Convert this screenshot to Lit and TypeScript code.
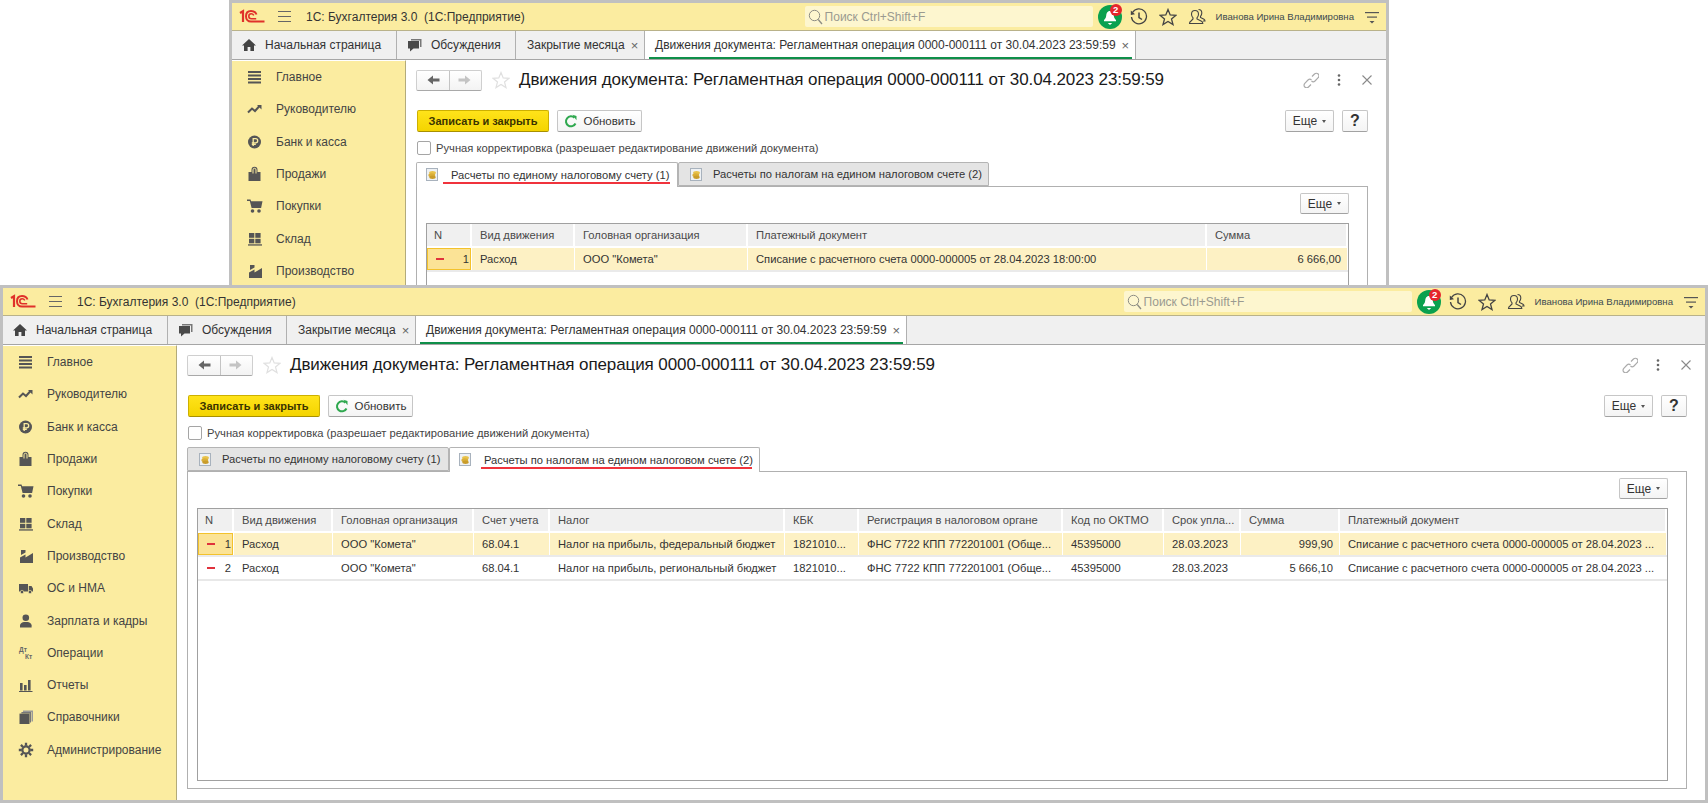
import { LitElement, html, css, svg } from "lit";
import { customElement, property } from "lit/decorators.js";

const ic = (body: unknown, size = 16, vb = 16) =>
  html`<svg width=${size} height=${size} viewBox="0 0 ${vb} ${vb}" aria-hidden="true">${body}</svg>`;

const ICONS: Record<string, unknown> = {
  main: svg`<g fill="#555"><rect x="1" y="2" width="13" height="2"/><rect x="1" y="5.5" width="13" height="2"/><rect x="1" y="9" width="13" height="2"/><rect x="1" y="12.5" width="13" height="2"/></g>`,
  trend: svg`<path d="M1 11.5 L5 7.5 L8 10 L12.5 5" fill="none" stroke="#555" stroke-width="2"/><path d="M10 4h4.5v4.5z" fill="#555"/>`,
  bank: svg`<circle cx="7.5" cy="8" r="6.5" fill="#555"/><path d="M6.2 12V4.6h2.4a2 2 0 0 1 0 4.2H4.8M4.8 10.4h4" fill="none" stroke="#fbeca0" stroke-width="1.3"/>`,
  bag: svg`<path d="M1.5 6h3V3.8a3 3 0 0 1 6 0V6h3v9h-12z" fill="#555"/><path d="M6 7.5V3.8a1.5 1.5 0 0 1 3 0V7.5" fill="none" stroke="#fbeca0" stroke-width="1"/>`,
  cart: svg`<path d="M0 1.5h3.5l.6 1.8H15.500l-1.400 6.700H4.600L2.800 3H0z" fill="#555"/><circle cx="5.5" cy="13" r="1.8" fill="#555"/><circle cx="12" cy="13" r="1.8" fill="#555"/>`,
  store: svg`<g fill="#555"><rect x="2" y="2" width="5.3" height="4.8"/><rect x="8.3" y="2" width="5.3" height="4.8"/><rect x="2" y="7.8" width="5.3" height="4.5"/><rect x="8.3" y="7.8" width="5.3" height="4.5"/><rect x="1" y="13.3" width="14" height="1.3"/></g>`,
  factory: svg`<path d="M2 15V9.5L7.5 6.5v3L15 5v10z" fill="#555"/><path d="M3 2h4.5v2.5L3 7z" fill="#555"/>`,
  truck: svg`<path d="M1 4h9v7.5H1zM10.8 6h2.7l1.5 2.4v3.1h-4.2z" fill="#555"/><circle cx="4" cy="12" r="1.7" fill="#555" stroke="#fbeca0" stroke-width=".6"/><circle cx="12" cy="12" r="1.7" fill="#555" stroke="#fbeca0" stroke-width=".6"/>`,
  person: svg`<circle cx="7.8" cy="4.8" r="3.3" fill="#555"/><path d="M2 14.5v-2.3c0-2 2.5-3 4-3.200h3.600c1.500.2 4 1.200 4 3.200v2.300z" fill="#555"/>`,
  dtkt: svg`<text x="1" y="7" font-size="6.5" font-weight="700" fill="#666" font-family="Liberation Sans, sans-serif">Дт</text><text x="7" y="14" font-size="6.5" font-weight="700" fill="#666" font-family="Liberation Sans, sans-serif">Кт</text>`,
  chart: svg`<g fill="#555"><rect x="2" y="6" width="2.6" height="7.5"/><rect x="6" y="8" width="2.6" height="5.5"/><rect x="10" y="3" width="2.6" height="10.5"/><rect x="1" y="14" width="13.5" height="1"/></g>`,
  books: svg`<path d="M5 1.5h10v11h-1.5V3H5z" fill="#999"/><path d="M3.4 3H13v10.5h-1.3V4.4H3.4z" fill="#777"/><rect x="1.5" y="4.6" width="10" height="10.4" fill="#555"/>`,
  gear: svg`<circle cx="8" cy="8" r="3.6" fill="none" stroke="#555" stroke-width="2.2"/><g stroke="#555" stroke-width="2.3"><path d="M8 .8v3M8 12.2v3M.8 8h3M12.2 8h3M2.9 2.9l2.1 2.1M11 11l2.1 2.1M2.9 13.1 5 11M11 5l2.1-2.1"/></g>`,
};

const NAV: [string, string][] = [
  ["main", "Главное"], ["trend", "Руководителю"], ["bank", "Банк и касса"], ["bag", "Продажи"],
  ["cart", "Покупки"], ["store", "Склад"], ["factory", "Производство"], ["truck", "ОС и НМА"],
  ["person", "Зарплата и кадры"], ["dtkt", "Операции"], ["chart", "Отчеты"], ["books", "Справочники"],
  ["gear", "Администрирование"],
];

const TITLE = "Движения документа: Регламентная операция 0000-000111 от 30.04.2023 23:59:59";
const SUB_TABS = ["Расчеты по единому налоговому счету (1)", "Расчеты по налогам на едином налоговом счете (2)"];

interface Column { title: string; width: number; right?: boolean }
interface TableData { columns: Column[]; rows: string[][] }

const logo = html`<svg class="logo" width="26" height="16" viewBox="0 0 26 16" aria-hidden="true">
  <path d="M1 4 4 2.2V13" fill="none" stroke="#e0312a" stroke-width="2.2"/>
  <path d="M17.5 5.5C16.5 3 14.5 2 12 2 8.8 2 7 4.3 7 7.3s1.9 5.3 5 5.3H25.5" fill="none" stroke="#e0312a" stroke-width="2"/>
  <path d="M14.8 6.3C14 5 13 4.8 12.2 4.8 10.6 4.8 9.8 6 9.8 7.3s.9 2.5 2.6 2.5h4.8" fill="none" stroke="#e0312a" stroke-width="1.6"/>
</svg>`;

const coin = html`<svg class="coin" width="12" height="13" viewBox="0 0 12 13" aria-hidden="true">
  <rect x=".5" y=".5" width="11" height="12" fill="#eef1f4" stroke="#a8b2bd"/>
  <ellipse cx="6.5" cy="4.8" rx="3.4" ry="1.9" fill="#e8c24a"/>
  <ellipse cx="5.8" cy="7.2" rx="3.4" ry="1.9" fill="#d9ae38"/>
  <ellipse cx="6.5" cy="9.2" rx="3.2" ry="1.7" fill="#c99c2a"/>
</svg>`;

@customElement("doc-window")
class DocWindow extends LitElement {
  @property({ type: Number }) activeTab = 0;
  @property({ type: Boolean, reflect: true }) clipped = false;
  @property({ type: Number }) navCount = 13;
  @property({ attribute: false }) table: TableData = { columns: [], rows: [] };

  static styles = css`
    :host { display: flex; flex-direction: column; box-sizing: border-box; border: 3px solid #c0c0c0; background: #fff; overflow: hidden; font: 12px "Liberation Sans", Arial, sans-serif; color: #333; }
    :host([clipped]) { border-bottom: 0; }
    svg { display: block; flex: none; }
    .hdr { flex: none; height: 27px; display: flex; align-items: center; background: #fbeca0; border-bottom: 1px solid #b9b28a; }
    .logo { margin-left: 7px; }
    .burger { margin-left: 13px; width: 13px; height: 11px; border-top: 1px solid #666; border-bottom: 1px solid #666; position: relative; box-sizing: border-box; }
    .burger::after { content: ""; position: absolute; left: 0; right: 0; top: 4px; height: 1px; background: #666; }
    .app { margin-left: 15px; white-space: pre; }
    .search { margin-left: auto; width: 288px; height: 21px; box-sizing: border-box; background: #fdf6cf; border-radius: 2px; display: flex; align-items: center; padding-left: 3px; gap: 1px; color: #9a9a90; font-size: 12px; }
    .bell { position: relative; margin-left: 5px; width: 24px; height: 24px; flex: none; }
    .badge { position: absolute; left: 12px; top: -1px; width: 12px; height: 12px; border-radius: 50%; background: #e5262c; color: #fff; font-size: 9.5px; font-weight: 700; line-height: 12px; text-align: center; }
    .hic { margin-left: 8px; }
    .hic.s1 { margin-left: 11px; }
    .user { margin-left: 10px; font-size: 9.6px; white-space: nowrap; color: #3c4a50; }
    .menu { margin: 0 7px 0 11px; }

    .tabs { flex: none; height: 29px; box-sizing: border-box; display: flex; background: #f0f0f0; border-bottom: 1px solid #a6a6a6; }
    .tab { box-sizing: border-box; flex: none; height: 28px; display: flex; align-items: center; border-right: 1px solid #b0b0b0; position: relative; white-space: nowrap; }
    .t1 { width: 165px; padding-left: 9px; }
    .t1 span { margin-left: 8px; }
    .t2 { width: 119px; padding-left: 10px; }
    .t2 span { margin-left: 8px; }
    .t3 { width: 129px; padding-left: 11px; }
    .t4 { width: 491px; padding-left: 10px; background: #fff; }
    .t4::after { content: ""; position: absolute; left: 4px; right: 3px; bottom: 0; height: 2px; background: #0f8f4a; }
    .x { margin-left: 6px; color: #666; font-size: 13px; }

    .body { flex: 1; min-height: 0; display: flex; }
    .side { flex: none; width: 174px; box-sizing: border-box; background: #fbeca0; border-top: 1px solid #fff; border-right: 1px solid #b3ab7a; }
    .nav { height: 32.3px; display: flex; align-items: center; padding-left: 15px; color: #444; }
    .nav span { margin-left: 13px; }
    .main { flex: 1; min-width: 0; display: flex; flex-direction: column; padding: 9px 18px 11px 10px; font-size: 11.2px; }
    .tr { flex: none; height: 22px; display: flex; align-items: center; }
    .back-fwd { display: flex; width: 66px; height: 21px; box-sizing: border-box; border: 1px solid #cfcfcf; border-bottom-color: #a9a9a9; border-radius: 2px; background: linear-gradient(#fff, #f3f3f3); }
    .back-fwd div { flex: 1; display: flex; align-items: center; justify-content: center; }
    .back-fwd div + div { border-left: 1px solid #c4c4c4; }
    .star { margin-left: 10px; }
    .title { margin-left: 9px; font-size: 17px; letter-spacing: -0.1px; color: #1a1a1a; white-space: nowrap; }
    .tools { margin-left: auto; margin-right: -7px; display: flex; align-items: center; gap: 12px; }
    .cmd { flex: none; margin-top: 19px; height: 22px; display: flex; padding-left: 1px; font-size: 11.5px; }
    .btn { box-sizing: border-box; height: 22px; display: flex; align-items: center; justify-content: center; border: 1px solid #c6c6c6; border-bottom-color: #a2a2a2; border-radius: 2px; background: linear-gradient(#fff, #f4f4f4); white-space: nowrap; }
    .save { width: 132px; font-size: 11px; font-weight: 700; background: linear-gradient(#ffe31a, #f4d400); border-color: #cdb000; border-bottom-color: #a89000; color: #3a3300; }
    .refresh { width: 85px; margin-left: 8px; gap: 6px; }
    .more { width: 49px; gap: 5px; font-size: 12px; }
    .caret { width: 0; height: 0; border: 2px solid transparent; border-top: 3px solid #555; border-bottom: 0; }
    .more.top { margin-left: auto; }
    .help { width: 26px; margin-left: 8px; font-size: 16px; font-weight: 700; }
    .check { flex: none; margin-top: 9px; height: 14px; display: flex; align-items: center; padding-left: 1px; }
    .box { width: 14px; height: 14px; box-sizing: border-box; border: 1px solid #a5a5a5; border-radius: 2px; background: #fff; }
    .check span { margin-left: 5px; color: #444; }
    .strip { flex: none; margin-top: 7px; height: 24px; display: flex; position: relative; z-index: 1; }
    .st { box-sizing: border-box; height: 24px; display: flex; align-items: center; border: 1px solid #b4b4b4; border-radius: 2px 2px 0 0; background: #e4e4e4; white-space: nowrap; position: relative; padding-left: 11px; }
    .st span { margin-left: 11px; }
    .st.on { background: #fff; border-bottom: 0; height: 25px; padding-bottom: 1px; padding-left: 9px; }
    .st.on span { margin-left: 13px; }
    .st.on::after { content: ""; position: absolute; right: 7px; bottom: 3px; height: 2px; background: #f0333c; }
    .st.s1 { width: 262px; }
    .st.s2 { width: 311px; }
    .st.on.s1::after { left: 26px; }
    .st.on.s2::after { left: 31px; }
    .panel { flex: 1; min-height: 0; box-sizing: border-box; border: 1px solid #b0b0b0; padding: 6px 18px 7px 9px; display: flex; flex-direction: column; }
    :host([clipped]) .panel { flex: none; height: 318px; }
    .pbar { flex: none; height: 21px; display: flex; justify-content: flex-end; }
    .pbar .btn { height: 21px; }
    .grid { flex: 1; min-height: 0; margin-top: 9px; box-sizing: border-box; border: 1px solid #a0a0a0; overflow: hidden; }
    .row { display: grid; height: 24px; box-sizing: border-box; }
    .row.head { background: #fff; height: 24px; }
    .row.body-row { border-bottom: 2px solid #e8e8e8; }
    .row.cur { background: #fdf1c4; border-bottom-color: #eaeaea; }
    .c { min-width: 0; height: 22px; display: flex; align-items: center; padding: 0 6px 0 8px; overflow: hidden; white-space: nowrap; border-right: 1px solid #fff; }
    .head .c { background: #f0f0f0; color: #4a4a4a; border-right: 2px solid #fff; }
    .head .c:first-child { padding-left: 7px; }
    .r { justify-content: flex-end; }
    .num { padding: 0 2px 0 9px; justify-content: space-between; }
    .cur .num { background: #fbe396; box-shadow: inset 0 0 0 1px #f3c22c; }
    .minus { width: 8px; height: 2px; background: #e0323c; flex: none; }
  `;

  private renderTable() {
    const { columns, rows } = this.table;
    const tpl = columns.map((c, i) => (i === columns.length - 1 ? "1fr" : `${c.width}px`)).join(" ");
    return html`<div class="grid">
      <div class="row head" style="grid-template-columns:${tpl}">
        ${columns.map((c) => html`<div class="c">${c.title}</div>`)}
      </div>
      ${rows.map((r, ri) => html`<div class="row body-row ${ri === 0 ? "cur" : ""}" style="grid-template-columns:${tpl}">
        <div class="c num"><i class="minus"></i><span>${ri + 1}</span></div>
        ${r.map((v, i) => html`<div class="c ${columns[i + 1].right ? "r" : ""}">${v}</div>`)}
      </div>`)}
    </div>`;
  }

  render() {
    return html`
      <div class="hdr">
        ${logo}
        <div class="burger"></div>
        <div class="app">1С: Бухгалтерия 3.0  (1С:Предприятие)</div>
        <div class="search">
          ${ic(svg`<circle cx="6.5" cy="6.5" r="5.2" fill="none" stroke="#8d8d84" stroke-width="1"/><path d="M10.2 10.5 14 15" stroke="#8d8d84" stroke-width="1.3"/>`)}
          <span>Поиск Ctrl+Shift+F</span>
        </div>
        <div class="bell">
          ${ic(svg`<circle cx="12" cy="12" r="12" fill="#0aa14f"/><path d="M12 6c-2.8 0-3.6 2.6-3.8 4.8-.2 2-1.2 3.4-2.2 4.2v1.2h12V15c-1-.8-2-2.2-2.2-4.2C15.6 8.6 14.8 6 12 6z" fill="#fff"/><path d="M9.8 18h4.400l-2.200 2z" fill="#fff"/>`, 24, 24)}
          <div class="badge">2</div>
        </div>
        <div class="hic">${ic(svg`<path d="M2.5 4.5A7.5 7.5 0 1 1 1.5 9" fill="none" stroke="#444" stroke-width="1.3"/><path d="M.8 2.5 5 6.2.8 7z" fill="#444"/><path d="M9 4.5V9.5l3 2" fill="none" stroke="#444" stroke-width="1.5"/>`, 18, 18)}</div>
        <div class="hic s1">${ic(svg`<path d="M9 1.5 11.2 6.9l5.800.4-4.500 3.700 1.500 5.600L9 13.500l-5 3.100 1.500-5.600L1 7.300l5.800-.4z" fill="none" stroke="#444" stroke-width="1.3"/>`, 18, 18)}</div>
        <div class="hic s1">${ic(svg`<path d="M7 2.5c2.3 0 3.5 1.7 3.5 3.8 0 1.600-.8 2.800-1.500 3.500v1.200l4.500 2.200c1 .5 1.300 1.300 1.300 2.300H1.500c0-1 .3-1.800 1.300-2.300L5 11V9.800C4.300 9.100 3.500 7.900 3.500 6.300 3.500 4.200 4.700 2.500 7 2.500z" fill="none" stroke="#444" stroke-width="1.1"/><path d="M10.5 1.5c2 0 3.300 1.500 3.300 3.500 0 1.500-.7 2.600-1.300 3.300v1.200l3.500 1.800c.7.400 1 1 1 1.700h-2" fill="none" stroke="#444" stroke-width="1.1"/>`, 18, 18)}</div>
        <div class="user">Иванова Ирина Владимировна</div>
        <div class="menu">${ic(svg`<rect x="0" y="2" width="14" height="1.2" fill="#555"/><rect x="2" y="6.5" width="10" height="1.2" fill="#555"/><path d="M4.5 11h5L7 13.500z" fill="#555"/>`, 14, 14)}</div>
      </div>

      <div class="tabs">
        <div class="tab t1">${ic(svg`<path d="M8 2 1 8.500h2V14h3.600v-4h2.800v4H13V8.500h2z" fill="#444"/>`)}<span>Начальная страница</span></div>
        <div class="tab t2">${ic(svg`<path d="M4 2h10.500v8H13V3.500H4z" fill="#777"/><path d="M1 4h11v7.500H6.500L3 14.500v-3H1z" fill="#4a4a4a"/>`)}<span>Обсуждения</span></div>
        <div class="tab t3"><span>Закрытие месяца</span><span class="x">×</span></div>
        <div class="tab t4"><span>${TITLE}</span><span class="x">×</span></div>
      </div>

      <div class="body">
        <div class="side">
          ${NAV.slice(0, this.navCount).map(([k, t]) => html`<div class="nav">${ic(ICONS[k])}<span>${t}</span></div>`)}
        </div>
        <div class="main">
          <div class="tr">
            <div class="back-fwd">
              <div>${ic(svg`<path d="M1.500 7 7 2.500V5.500h6.500V8.500H7V11.500z" fill="#666"/>`, 14, 14)}</div>
              <div>${ic(svg`<path d="M12.500 7 7 2.500V5.500H.5V8.500H7V11.500z" fill="#c4c4c4"/>`, 14, 14)}</div>
            </div>
            <div class="star">${ic(svg`<path d="M9 1.500 11.200 6.900l5.800.4-4.500 3.700 1.500 5.600L9 13.500l-5 3.100 1.500-5.600L1 7.300l5.800-.4z" fill="#fff" stroke="#e0e0e0" stroke-width="1.200"/>`, 18, 18)}</div>
            <div class="title">${TITLE}</div>
            <div class="tools">
              ${ic(svg`<g fill="none" stroke="#aaa" stroke-width="1.200"><path d="M9 4.500 11.500 2a2.600 2.600 0 0 1 3.700 3.700L12 9a2.600 2.600 0 0 1-3.500 0"/><path d="M8 12.500 5.500 15A2.600 2.600 0 0 1 1.800 11.300L5 8a2.600 2.600 0 0 1 3.500 0"/></g>`)}
              ${ic(svg`<g fill="#666"><circle cx="8" cy="3.500" r="1.300"/><circle cx="8" cy="8" r="1.300"/><circle cx="8" cy="12.500" r="1.300"/></g>`)}
              ${ic(svg`<path d="M3.500 3.500 12.500 12.500M12.500 3.500 3.500 12.500" stroke="#8a8a8a" stroke-width="1.100"/>`)}
            </div>
          </div>
          <div class="cmd">
            <div class="btn save">Записать и закрыть</div>
            <div class="btn refresh">${ic(svg`<path d="M11.500 3.800A5 5 0 1 0 12.500 9.500" fill="none" stroke="#2fa84f" stroke-width="2"/><path d="M9.500 .8 13.500 2v4.300z" fill="#2fa84f"/>`, 14, 14)}<span>Обновить</span></div>
            <div class="btn more top"><span>Еще</span><i class="caret"></i></div>
            <div class="btn help">?</div>
          </div>
          <div class="check"><div class="box"></div><span>Ручная корректировка (разрешает редактирование движений документа)</span></div>
          <div class="strip">
            ${SUB_TABS.map((t, i) => html`<div class="st s${i + 1} ${i === this.activeTab ? "on" : ""}">${coin}<span>${t}</span></div>`)}
          </div>
          <div class="panel">
            <div class="pbar"><div class="btn more"><span>Еще</span><i class="caret"></i></div></div>
            ${this.renderTable()}
          </div>
        </div>
      </div>
    `;
  }
}

const backTable: TableData = {
  columns: [
    { title: "N", width: 45 }, { title: "Вид движения", width: 103 }, { title: "Головная организация", width: 173 },
    { title: "Платежный документ", width: 459 }, { title: "Сумма", width: 141, right: true },
  ],
  rows: [["Расход", "ООО \"Комета\"", "Списание с расчетного счета 0000-000005 от 28.04.2023 18:00:00", "6 666,00"]],
};

const PAY = "Списание с расчетного счета 0000-000005 от 28.04.2023 ...";
const REG = "ФНС 7722 КПП 772201001 (Обще...";
const frontTable: TableData = {
  columns: [
    { title: "N", width: 36 }, { title: "Вид движения", width: 99 }, { title: "Головная организация", width: 141 },
    { title: "Счет учета", width: 76 }, { title: "Налог", width: 235 }, { title: "КБК", width: 74 },
    { title: "Регистрация в налоговом органе", width: 204 }, { title: "Код по ОКТМО", width: 101 },
    { title: "Срок упла...", width: 77 }, { title: "Сумма", width: 99, right: true }, { title: "Платежный документ", width: 326 },
  ],
  rows: [
    ["Расход", "ООО \"Комета\"", "68.04.1", "Налог на прибыль, федеральный бюджет", "1821010...", REG, "45395000", "28.03.2023", "999,90", PAY],
    ["Расход", "ООО \"Комета\"", "68.04.1", "Налог на прибыль, региональный бюджет", "1821010...", REG, "45395000", "28.03.2023", "5 666,10", PAY],
  ],
};

@customElement("app-root")
export class AppRoot extends LitElement {
  static styles = css`
    :host { display: block; position: relative; width: 1708px; height: 803px; background: #fff; overflow: hidden; }
    doc-window { position: absolute; }
    .back { left: 229px; top: 0; width: 1160px; height: 285px; }
    .front { left: 0; top: 285px; width: 1708px; height: 518px; }
  `;
  render() {
    return html`
      <doc-window class="back" clipped .activeTab=${0} .navCount=${7} .table=${backTable}></doc-window>
      <doc-window class="front" .activeTab=${1} .table=${frontTable}></doc-window>
    `;
  }
}
